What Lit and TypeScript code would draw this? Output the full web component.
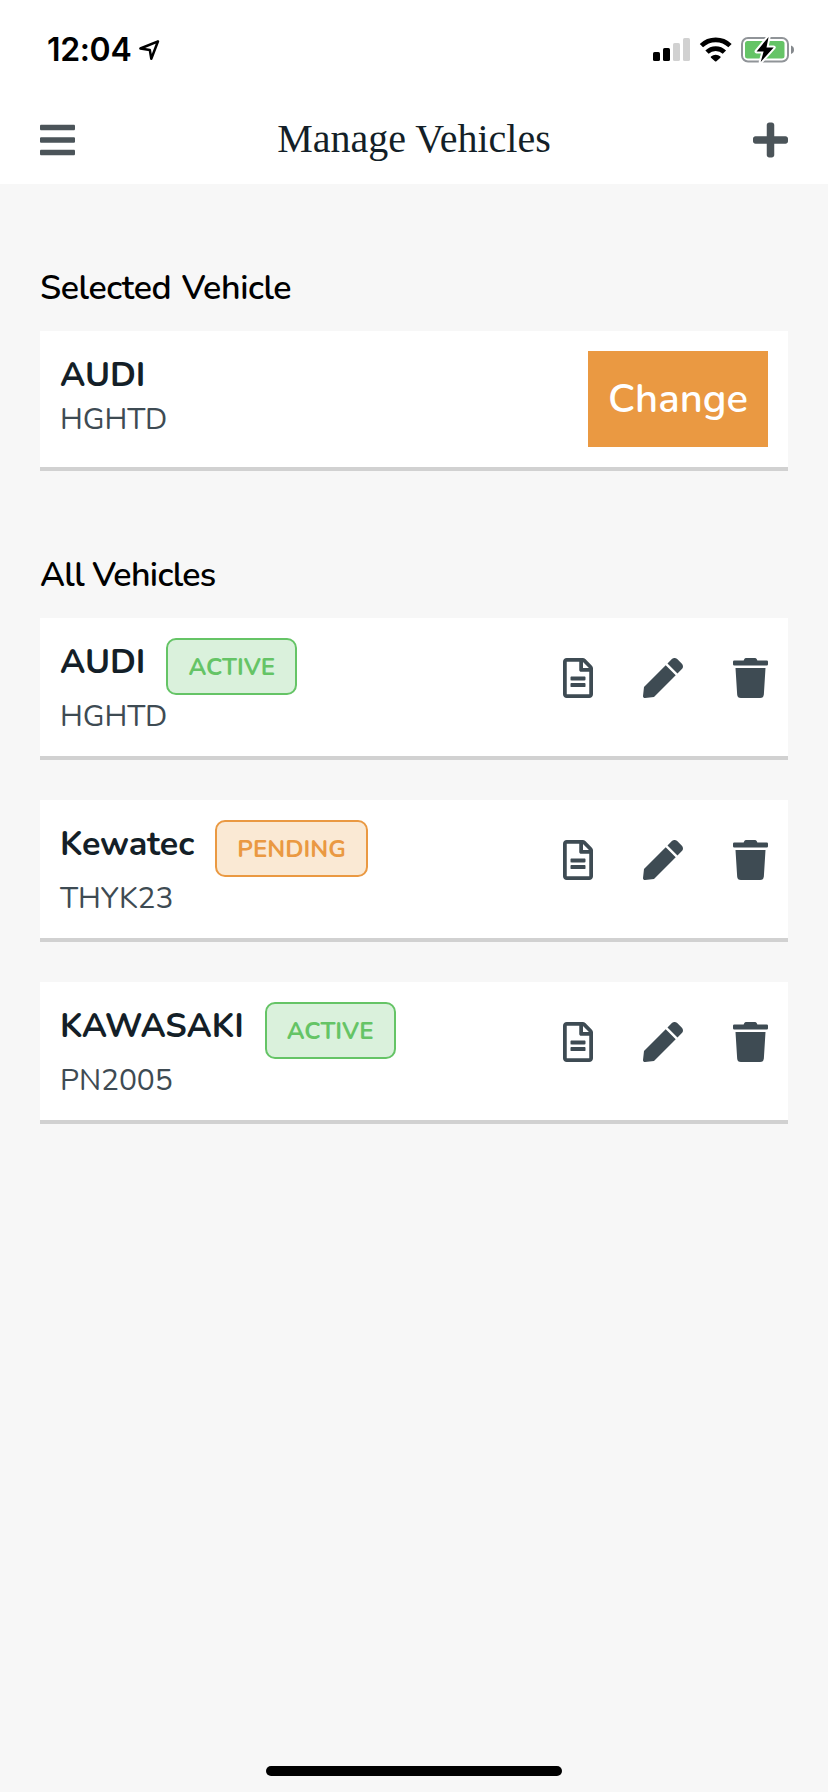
import { LitElement, html, css, svg } from "lit";
import { customElement, property } from "lit/decorators.js";
import { classMap } from "lit/directives/class-map.js";

interface Vehicle {
  name: string;
  plate: string;
  status: "active" | "pending";
}

const VEHICLES: Vehicle[] = [
  { name: "AUDI", plate: "HGHTD", status: "active" },
  { name: "Kewatec", plate: "THYK23", status: "pending" },
  { name: "KAWASAKI", plate: "PN2005", status: "active" },
];

const ICONS = {
  bars: { width: 448, d: "M16 132h416c8.837 0 16-7.163 16-16V76c0-8.837-7.163-16-16-16H16C7.163 60 0 67.163 0 76v40c0 8.837 7.163 16 16 16zm0 160h416c8.837 0 16-7.163 16-16v-40c0-8.837-7.163-16-16-16H16c-8.837 0-16 7.163-16 16v40c0 8.837 7.163 16 16 16zm0 160h416c8.837 0 16-7.163 16-16v-40c0-8.837-7.163-16-16-16H16c-8.837 0-16 7.163-16 16v40c0 8.837 7.163 16 16 16z" },
  plus: { width: 448, d: "M416 208H272V64c0-17.67-14.33-32-32-32h-32c-17.67 0-32 14.33-32 32v144H32c-17.67 0-32 14.33-32 32v32c0 17.67 14.33 32 32 32h144v144c0 17.67 14.33 32 32 32h32c17.67 0 32-14.33 32-32V304h144c17.67 0 32-14.33 32-32v-32c0-17.67-14.33-32-32-32z" },
  file: { width: 384, d: "M288 248v28c0 6.6-5.4 12-12 12H108c-6.6 0-12-5.4-12-12v-28c0-6.6 5.4-12 12-12h168c6.6 0 12 5.4 12 12zm-12 72H108c-6.6 0-12 5.4-12 12v28c0 6.6 5.4 12 12 12h168c6.6 0 12-5.4 12-12v-28c0-6.6-5.4-12-12-12zm108-188.1V464c0 26.5-21.5 48-48 48H48c-26.5 0-48-21.5-48-48V48C0 21.5 21.5 0 48 0h204.1C264.8 0 277 5.1 286 14.1L369.9 98c9 8.9 14.1 21.2 14.1 33.9zm-128-80V128h76.1L256 51.9zM336 464V176H232c-13.3 0-24-10.7-24-24V48H48v416h288z" },
  pen: { width: 512, d: "M290.74 93.24l128.02 128.02-277.99 277.99-114.14 12.6C11.35 513.54-1.56 500.62.14 485.34l12.7-114.22 277.9-277.88zm207.2-19.06l-60.11-60.11c-18.75-18.75-49.16-18.75-67.91 0l-56.55 56.55 128.02 128.02 56.55-56.55c18.75-18.76 18.75-49.16 0-67.91z" },
  trash: { width: 448, d: "M432 32H312l-9.4-18.7A24 24 0 0 0 281.1 0H166.8a23.72 23.72 0 0 0-21.4 13.3L136 32H16A16 16 0 0 0 0 48v32a16 16 0 0 0 16 16h416a16 16 0 0 0 16-16V48a16 16 0 0 0-16-16zM53.2 467a48 48 0 0 0 47.9 45h245.8a48 48 0 0 0 47.9-45L416 128H32z" },
};

@customElement("app-icon")
export class AppIcon extends LitElement {
  static styles = css`
    :host { display: block; height: 40px; }
    .icon { display: block; height: 40px; fill: currentColor; }
  `;

  @property() name: keyof typeof ICONS = "bars";

  render() {
    const { width, d } = ICONS[this.name];
    return html`<svg class="icon" width=${(width * 40) / 512} viewBox="0 0 ${width} 512">${svg`<path d=${d} />`}</svg>`;
  }
}

@customElement("status-bar")
export class StatusBar extends LitElement {
  static styles = css`
    :host {
      display: flex;
      justify-content: space-between;
      height: 100px;
      padding: 0 32px 0 47px;
      box-sizing: border-box;
      color: #000;
    }
    .left { display: flex; align-items: flex-start; }
    .time {
      font: 600 32px/38px "Inter", "Liberation Sans", sans-serif;
      letter-spacing: -0.35px;
      margin-top: 31px;
    }
    .glyph { display: block; margin-top: 34px; }
    .arrow { margin-left: 6px; }
  `;

  render() {
    return html`
      <div class="left">
        <span class="time">12:04</span>
        <svg class="glyph arrow" width="24" height="30" viewBox="137 34 24 30">
          <path d="M158 41.3 140.4 48.5l9.4 1.4 1.5 8.9z" fill="none" stroke="#000" stroke-width="2.5" stroke-linejoin="round" />
        </svg>
      </div>
      <svg class="glyph" width="146" height="30" viewBox="650 34 146 30">
        <rect x="653" y="52" width="7" height="9" rx="1.6" />
        <rect x="663" y="48" width="7" height="13" rx="1.6" />
        <rect x="673" y="43" width="7" height="18" rx="1.6" fill="#d1d1d1" />
        <rect x="683" y="38" width="7" height="23" rx="1.6" fill="#d1d1d1" />
        <g fill="none" stroke="#000" stroke-width="4.7">
          <path d="M701.4 45.6a20.6 20.6 0 0 1 28.6 0" />
          <path d="M707 52.1a12.4 12.4 0 0 1 17.4 0" />
        </g>
        <path d="M711 56.6a7.2 7.2 0 0 1 9.4 0q.6.6 0 1.2l-4 3.4q-.7.6-1.4 0l-4-3.4q-.6-.6 0-1.2z" />
        <rect x="742" y="38" width="46" height="23.5" rx="6" fill="none" stroke="#909498" stroke-width="2" />
        <rect x="745" y="41" width="39.5" height="17.5" rx="2.5" fill="#65c466" />
        <path d="M791 45.5q3 1 3 4.2t-3 4.2z" fill="#85898d" />
        <path d="M768.6 36.9 756.6 51.4h7l-2.9 10.6 13-14.6h-7.2z" fill="#000" stroke="#fff" stroke-width="4" stroke-linejoin="round" paint-order="stroke" />
      </svg>
    `;
  }
}

@customElement("vehicle-card")
export class VehicleCard extends LitElement {
  static styles = css`
    :host {
      display: flex;
      justify-content: space-between;
      align-items: flex-start;
      padding: 20px;
      background: #fff;
      border-bottom: 4px solid #d1d1d1;
    }
    .heading { display: flex; align-items: flex-start; gap: 21px; }
    .name {
      padding-top: 1px;
      font-size: 34px;
      font-weight: 700;
      line-height: 47px;
      letter-spacing: -0.12px;
      color: #141f28;
    }
    .plate {
      font-size: 30px;
      font-weight: 400;
      line-height: 41px;
      letter-spacing: -0.1px;
      color: #3e4b53;
    }
    .listed { padding-top: 1px; margin-bottom: -1px; }
    .badge {
      padding: 11px 20.2px 9px;
      border: 2px solid;
      border-radius: 10px;
      font-size: 24px;
      font-weight: 700;
      line-height: 33px;
    }
    .active { color: #65c466; background: #daf1dc; }
    .pending { color: #ea9942; background: #fae9d4; }
    .actions { display: flex; gap: 50px; padding-top: 20px; color: #3e4b53; }
  `;

  @property({ attribute: false }) vehicle!: Vehicle;
  @property({ type: Boolean }) selected = false;

  render() {
    const { name, plate, status } = this.vehicle;
    return html`
      <div>
        <div class="heading">
          <span class="name">${name}</span>
          ${this.selected
            ? ""
            : html`<span class=${classMap({ badge: true, [status]: true })}>${status.toUpperCase()}</span>`}
        </div>
        <div class=${classMap({ plate: true, listed: !this.selected })}>${plate}</div>
      </div>
      ${this.selected
        ? html`<slot></slot>`
        : html`<div class="actions">
            <app-icon name="file"></app-icon>
            <app-icon name="pen"></app-icon>
            <app-icon name="trash"></app-icon>
          </div>`}
    `;
  }
}

@customElement("app-root")
export class AppRoot extends LitElement {
  static styles = css`
    :host {
      display: flex;
      flex-direction: column;
      height: 1792px;
      overflow: hidden;
      background: #f7f7f7;
      font-family: "Nunito", "Lato", sans-serif;
    }
    .header { background: #fff; height: 184px; }
    .nav {
      display: flex;
      align-items: center;
      justify-content: space-between;
      height: 80px;
      padding: 0 40px;
      color: #4b5459;
    }
    .title {
      margin: 0;
      padding-bottom: 2px;
      font: 400 40px/46px "Liberation Serif", "Times New Roman", serif;
      color: #141f28;
    }
    .content { flex: 1; padding: 0 40px; }
    .section { padding-top: 80px; }
    .label {
      margin: 0 0 18px;
      font-size: 34px;
      font-weight: 600;
      line-height: 49px;
      letter-spacing: -0.4px;
      word-spacing: 2px;
      color: #000;
    }
    .tight { letter-spacing: -0.65px; word-spacing: 0; }
    .list { display: flex; flex-direction: column; gap: 40px; }
    .change {
      display: block;
      width: 180px;
      height: 96px;
      padding: 0;
      border: 0;
      background: #ea9942;
      color: #fff;
      font: 600 40px/55px "Nunito", "Lato", sans-serif;
    }
    .home {
      align-self: center;
      width: 296px;
      height: 10px;
      margin-bottom: 16px;
      border-radius: 5px;
      background: #000;
    }
  `;

  render() {
    return html`
      <header class="header">
        <status-bar></status-bar>
        <nav class="nav">
          <app-icon name="bars"></app-icon>
          <h1 class="title">Manage Vehicles</h1>
          <app-icon name="plus"></app-icon>
        </nav>
      </header>
      <main class="content">
        <section class="section">
          <h2 class="label">Selected Vehicle</h2>
          <vehicle-card selected .vehicle=${VEHICLES[0]}>
            <button class="change">Change</button>
          </vehicle-card>
        </section>
        <section class="section">
          <h2 class="label tight">All Vehicles</h2>
          <div class="list">
            ${VEHICLES.map((v) => html`<vehicle-card .vehicle=${v}></vehicle-card>`)}
          </div>
        </section>
      </main>
      <div class="home"></div>
    `;
  }
}
